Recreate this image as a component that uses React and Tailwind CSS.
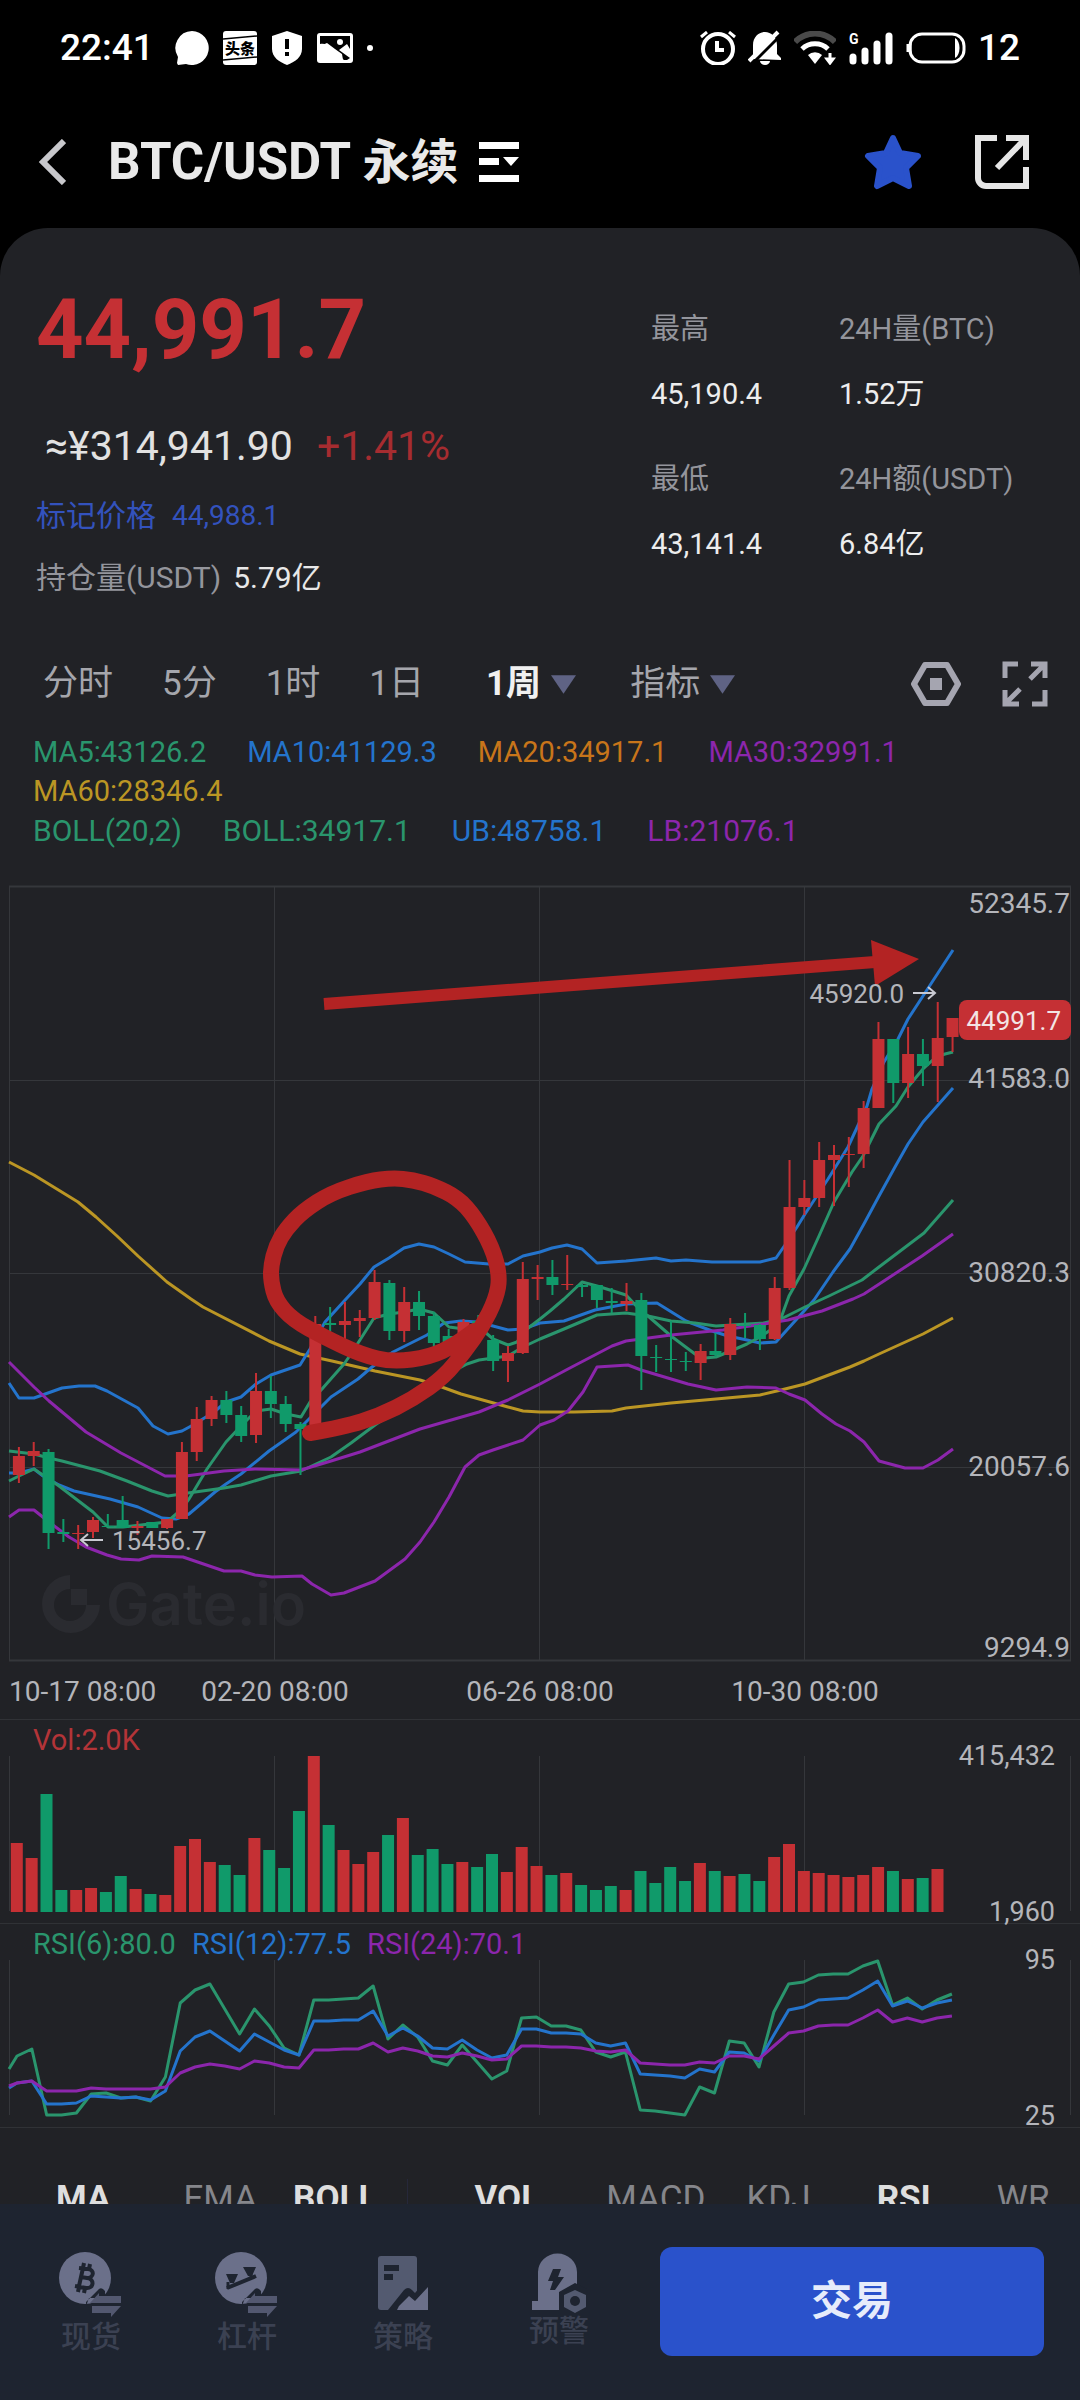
import { useState } from 'react';

const RED = '#c53034';
const GREEN = '#109a6a';
const LINE_GREEN = '#2a956d';
const LINE_BLUE = '#2474cc';
const LINE_PURPLE = '#8c26ac';
const LINE_YELLOW = '#bb9624';
const GRID = '#35373b';

// [up, high, body top, body bottom, low]
const candles = [
  [1, 568, 577, 596, 604], [1, 563, 572, 577, 587], [0, 570, 573, 654, 670], [0, 640, 653, 655, 663],
  [1, 646, 654, 655, 670], [1, 638, 641, 653, 659], [0, 635, 647, 648, 648], [0, 617, 641, 649, 649],
  [1, 642, 647, 649, 656], [0, 643, 643, 649, 649], [1, 640, 640, 649, 650], [1, 563, 573, 640, 640],
  [1, 528, 540, 573, 582], [1, 517, 521, 540, 547], [0, 512, 521, 536, 544], [0, 527, 536, 557, 563],
  [1, 494, 512, 556, 564], [0, 497, 512, 525, 539], [0, 517, 525, 545, 553], [0, 543, 545, 550, 596],
  [1, 437, 445, 549, 549], [0, 428, 444, 446, 453], [1, 423, 442, 446, 460], [1, 431, 439, 442, 458],
  [1, 391, 403, 439, 441], [0, 401, 404, 452, 461], [1, 408, 423, 452, 463], [0, 412, 423, 437, 451],
  [0, 433, 437, 464, 468], [0, 450, 457, 465, 467], [1, 440, 443, 463, 465], [0, 436, 442, 457, 460],
  [0, 456, 461, 482, 492], [1, 467, 474, 482, 503], [1, 383, 400, 474, 475], [1, 386, 398, 400, 421],
  [0, 381, 398, 406, 416], [1, 376, 405, 406, 411], [0, 405, 406, 408, 418], [0, 406, 406, 421, 429],
  [0, 409, 422, 424, 434], [1, 404, 422, 425, 432], [0, 414, 421, 477, 511], [0, 466, 478, 479, 493],
  [0, 442, 480, 481, 493], [0, 473, 482, 483, 492], [1, 465, 472, 484, 501], [0, 454, 472, 476, 478],
  [1, 439, 445, 476, 481], [0, 434, 446, 447, 459], [0, 445, 446, 460, 471], [1, 398, 409, 460, 461],
  [1, 281, 328, 409, 411], [1, 301, 319, 328, 336], [1, 263, 281, 319, 328], [1, 266, 276, 281, 327],
  [1, 258, 275, 276, 308], [1, 222, 229, 275, 289], [1, 143, 160, 229, 229], [0, 160, 160, 204, 224],
  [1, 148, 175, 204, 219], [0, 160, 175, 187, 207], [1, 123, 159, 187, 223], [1, 139, 139, 158, 173],
];

const overlays = [
  {
    color: LINE_YELLOW,
    points: '9,283 34,296 65,315 78,323 96,338 117,357 138,377 167,403 191,420 203,428 269,462 300,475 332,482 375,492 420,501 439,507 461,515 508,528 523,532 540,533 574,533 612,532 626,529 671,524 716,520 760,516 781,511 805,505 850,488 864,482 879,475 923,455 953,439',
  },
  {
    color: LINE_BLUE,
    points: '9,504 19,519 34,519 62,509 79,507 95,507 107,512 138,529 153,547 168,555 182,552 193,546 214,533 226,523 241,518 256,505 271,496 300,486 310,470 325,443 346,420 360,405 374,388 389,379 404,369 419,365 434,368 449,375 465,383 489,385 508,385 523,377 540,373 552,369 567,366 582,370 597,384 626,382 656,379 671,382 686,381 712,383 760,383 776,379 785,366 797,348 805,335 828,300 848,268 867,227 872,210 884,183 898,160 908,140 923,117 953,71',
  },
  {
    color: LINE_BLUE,
    points: '9,594 19,594 34,590 43,597 59,606 74,612 110,620 138,628 162,639 176,640 189,635 215,613 226,605 241,595 269,572 296,553 322,527 331,518 358,500 372,488 393,473 427,456 444,444 461,442 478,443 493,447 508,451 523,450 540,444 564,442 595,431 626,425 657,424 686,442 712,452 728,457 747,461 760,464 776,463 795,442 814,421 833,393 850,370 865,343 879,317 895,288 908,265 923,243 953,209',
  },
  {
    color: LINE_GREEN,
    points: '9,602 19,597 34,590 59,607 93,633 108,648 123,648 141,646 167,643 182,630 189,620 207,590 226,563 241,547 256,532 271,530 286,535 301,538 310,523 322,510 344,485 351,475 374,439 389,435 404,433 419,430 434,434 449,448 464,450 478,447 493,460 508,466 517,463 527,450 540,440 550,432 564,420 582,403 597,407 626,416 641,432 648,437 671,457 695,475 705,479 716,478 733,471 747,465 760,458 775,448 781,439 789,417 804,390 819,357 834,323 852,293 863,277 879,245 896,227 908,208 923,190 936,178 945,175 953,173',
  },
  {
    color: LINE_GREEN,
    points: '9,572 34,575 49,579 62,582 100,592 127,602 152,612 168,617 188,614 224,609 241,606 271,597 301,592 331,578 351,564 375,546 413,520 448,495 467,485 479,481 508,477 523,468 540,460 564,450 597,436 626,434 648,437 671,442 695,444 716,447 747,445 764,444 781,440 805,428 829,417 862,401 879,388 924,354 953,321',
  },
  {
    color: LINE_PURPLE,
    points: '9,483 34,508 49,522 86,553 121,574 165,597 186,597 224,592 255,590 301,591 331,582 360,573 420,550 479,533 508,521 540,505 568,490 612,467 626,462 671,456 723,451 764,445 788,441 822,432 853,420 864,415 922,377 953,355',
  },
  {
    color: LINE_PURPLE,
    points: '9,638 19,631 34,631 49,643 69,658 86,668 107,676 121,680 139,681 152,677 183,678 224,692 241,692 255,696 272,698 302,697 312,705 331,716 344,714 375,702 405,680 420,663 434,643 449,618 465,588 479,576 493,571 523,561 540,546 554,541 568,532 583,513 597,488 628,486 641,491 688,505 716,511 747,508 776,509 789,515 805,521 822,535 836,545 850,552 864,563 879,582 905,589 923,589 938,581 953,570',
  },
];

// negative = falling week
const volumes = [
  69, 54, -118, -22, 22, 24, -20, -36, 23, -18, 17, 66, 73, 50, -47, -37, 74, -62, -44, -101, 156, -87, 62, 48, 60,
  -77, 94, -57, -63, -48, 50, -45, -58, 40, 65, 46, -37, 39, -27, -22, -26, 22, -41, -29, -45, -31, 49, -41, 36, -38,
  -31, 55, 68, 41, 39, 37, 35, 37, 45, -41, 33, -34, 43,
];

const rsi = [
  {
    color: LINE_GREEN,
    start: 109,
    values: [
      96, 89, 155, 155, 153, 134, 133, 138, 137, 141, 117, 43, 30, 24, 49, 74, 49, 66, 88, 95, 40, 40, 39, 38, 26, 79,
      65, 77, 101, 105, 85, 102, 119, 111, 58, 57, 66, 66, 70, 92, 97, 92, 150, 151, 153, 155, 127, 133, 81, 83, 107,
      52, 24, 22, 15, 14, 14, 6, 1, 45, 38, 49, 40, 34,
    ],
  },
  {
    color: LINE_BLUE,
    start: 128,
    values: [
      123, 121, 144, 144, 143, 136, 137, 138, 137, 140, 131, 91, 77, 71, 81, 91, 74, 82, 90, 95, 61, 61, 60, 60, 51,
      76, 68, 76, 88, 89, 80, 90, 98, 95, 69, 69, 73, 73, 74, 83, 86, 83, 114, 115, 116, 118, 109, 112, 92, 93, 101,
      75, 50, 47, 40, 39, 38, 30, 21, 46, 41, 48, 43, 40,
    ],
  },
  {
    color: LINE_PURPLE,
    start: 126,
    values: [
      123, 121, 131, 131, 131, 128, 129, 129, 129, 129, 127, 113, 107, 104, 106, 109, 101, 103, 107, 108, 90, 90, 89,
      89, 83, 92, 88, 91, 96, 97, 93, 96, 100, 99, 86, 86, 87, 87, 88, 91, 92, 90, 103, 104, 105, 105, 102, 103, 96,
      96, 99, 86, 73, 71, 66, 65, 65, 58, 50, 62, 58, 62, 58, 56,
    ],
  },
];

const gridX = [10, 275, 540, 805, 1071];

// hand drawn loop, turned into a soft curve
const loop = [
  [310, 554], [344, 548], [379, 537], [413, 520], [444, 498], [465, 472], [482, 448], [496, 420], [500, 397],
  [492, 368], [475, 338], [458, 319], [434, 307], [413, 301], [393, 299], [368, 302], [331, 314], [303, 332],
  [286, 350], [276, 367], [271, 387], [271, 402], [276, 422], [293, 441], [324, 458], [362, 476], [393, 483],
  [430, 478], [455, 466], [474, 452],
];

function softPath(pts) {
  let d = `M${pts[0][0]} ${pts[0][1]}`;
  for (let i = 1; i < pts.length - 1; i++) {
    const mx = (pts[i][0] + pts[i + 1][0]) / 2;
    const my = (pts[i][1] + pts[i + 1][1]) / 2;
    d += `Q${pts[i][0]} ${pts[i][1]} ${mx} ${my}`;
  }
  const last = pts[pts.length - 1];
  return `${d}L${last[0]} ${last[1]}`;
}

function StatusBar() {
  return (
    <div className="flex h-24 items-center px-[60px] text-[37px] font-medium text-white">
      <span>22:41</span>
      <div className="ml-[21px] flex items-center gap-[14px]">
        <svg className="h-[34px] w-[34px]" viewBox="0 0 34 34" fill="#fff">
          <path d="M17 0a17 17 0 1 1-6 33L3 34l-1-2 1-6A17 17 0 0 1 17 0z" />
        </svg>
        <svg className="h-[34px] w-[34px]" viewBox="0 0 34 34">
          <rect width="34" height="34" rx="3" fill="#fff" />
          <path d="M0 8l34-3M0 29l34-3" stroke="#000" strokeWidth="1.5" />
          <text x="17" y="23" textAnchor="middle" fontSize="15" fontWeight="900" fill="#000">头条</text>
        </svg>
        <svg className="h-[34px] w-[32px]" viewBox="0 0 32 34">
          <path d="M16 0l15 5v13c0 8-7 13-15 16C8 31 1 26 1 18V5z" fill="#fff" />
          <path d="M14 8h4v10h-4zM14 21h4v4h-4z" fill="#000" />
        </svg>
        <svg className="h-[34px] w-[36px]" viewBox="0 0 36 34">
          <rect y="2" width="36" height="30" rx="3" fill="#fff" />
          <path d="M3 15l7-3 8 6 7 5 1 6h4l3-2V5H3z" fill="#000" />
          <path d="M3 13c8-2 12 6 24 16H3zM22 19l8-6 3 5v9z" fill="#fff" />
          <circle cx="23" cy="11" r="3" fill="#fff" />
        </svg>
        <span className="h-[6px] w-[6px] rounded-full bg-white" />
      </div>
      <div className="ml-auto flex items-center gap-3">
        <svg className="h-[34px] w-[36px]" viewBox="0 0 36 34" fill="none" stroke="#fff">
          <circle cx="18" cy="18" r="15" strokeWidth="4" />
          <path d="M17 10v9h7" strokeWidth="4" />
          <path d="M1 6l6-5M35 6l-6-5" strokeWidth="3" />
        </svg>
        <svg className="h-[36px] w-[34px]" viewBox="0 0 34 36">
          <path d="M5 29V15C5 7 11 2 17 2s12 5 12 13v9l4 4v2z" fill="#fff" />
          <path d="M12 31h10a5 4 0 0 1-10 0z" fill="#fff" />
          <path d="M5 33L34 4" stroke="#000" strokeWidth="3" />
          <path d="M1 31L30 2" stroke="#fff" strokeWidth="4" />
        </svg>
        <svg className="h-[34px] w-[42px]" viewBox="0 0 42 34" fill="none">
          <path d="M1 11a28 28 0 0 1 40 0" stroke="#4a4a4a" strokeWidth="6" />
          <path d="M8 18a19 19 0 0 1 26 0" stroke="#fff" strokeWidth="5" />
          <path d="M14 24a10 10 0 0 1 14 0l-7 9z" fill="#fff" />
          <path d="M36 22v6M33 28l3 4 3-4z" stroke="#fff" strokeWidth="3" fill="#fff" />
        </svg>
        <svg className="h-[34px] w-[46px] overflow-visible" viewBox="0 0 46 34">
          <text x="1" y="13" fontSize="14" fontWeight="700" fill="#fff">G</text>
          <path d="M5 26v4M17 20v10M29 13v17M41 5v25" stroke="#fff" strokeWidth="7" strokeLinecap="round" />
        </svg>
        <svg className="h-[32px] w-[60px]" viewBox="0 0 60 32" fill="none">
          <rect x="4" y="2" width="54" height="28" rx="12" stroke="#fff" strokeWidth="3" />
          <path d="M3 12v8" stroke="#fff" strokeWidth="5" />
          <path d="M49 6c6 3 6 17 0 20z" fill="#fff" />
        </svg>
        <span>12</span>
      </div>
    </div>
  );
}

function Header() {
  return (
    <header className="flex h-[132px] items-center pl-[38px] pr-[51px]">
      <button aria-label="返回">
        <svg className="h-[46px] w-[28px]" viewBox="0 0 28 46" fill="none" stroke="#c8c8cc" strokeWidth="6">
          <path d="M26 2L5 23l21 21" />
        </svg>
      </button>
      <button className="ml-[42px] flex items-center text-[51px] font-bold text-[#e9e9e9]">
        <h1>
          BTC/USDT <span className="text-[48px]">永续</span>
        </h1>
        <svg className="ml-5 h-[40px] w-[40px]" viewBox="0 0 40 40" fill="#fff">
          <path d="M0 0h40v7H0zM0 16h20v7H0zM0 33h40v7H0zM24 15h16l-8 9z" />
        </svg>
      </button>
      <button className="ml-auto" aria-label="收藏">
        <svg className="h-[56px] w-[58px]" viewBox="0 0 58 56" fill="#2a52cb" stroke="#2a52cb" strokeWidth="6" strokeLinejoin="round">
          <path d="M29 4l7 15 18 3-12 12 3 18-16-8-16 8 3-18L4 22l18-3z" />
        </svg>
      </button>
      <button className="ml-[53px]" aria-label="分享">
        <svg className="h-[54px] w-[54px]" viewBox="0 0 54 54" fill="none" stroke="#e6e6e6" strokeWidth="6">
          <path d="M22 3H3v40a8 8 0 0 0 8 8h40V32" />
          <path d="M31 3h20v22M51 3L22 33" />
        </svg>
      </button>
    </header>
  );
}

function Stat({ label, value }) {
  return (
    <div>
      <dt className="text-[#94959c]">{label}</dt>
      <dd className="mt-[25px] text-[#ededed]">{value}</dd>
    </div>
  );
}

function Summary() {
  return (
    <section className="flex justify-between pl-9 pr-[60px] pt-[54px]">
      <div>
        <div className="text-[83px] font-bold leading-[96px] text-[#c53034]">44,991.7</div>
        <div className="mt-10 flex gap-6 pl-[9px] text-[41px] leading-[56px] text-[#e2e2e2]">
          <span>≈¥314,941.90</span>
          <span className="text-[#a62c30]">+1.41%</span>
        </div>
        <div className="mt-[22px] flex gap-4 text-[28px] leading-10 text-[#3352bd]">
          <span className="text-[30px]">标记价格</span>
          <span>44,988.1</span>
        </div>
        <div className="mt-[22px] flex gap-3 text-[30px] leading-10 text-[#e8e8e8]">
          <span className="text-[#94959c]">持仓量(USDT)</span>
          <span>5.79亿</span>
        </div>
      </div>
      <dl className="grid grid-cols-[188px_181px] content-start gap-y-[45px] pt-[27px] text-[29px] leading-10">
        <Stat label="最高" value="45,190.4" />
        <Stat label="24H量(BTC)" value="1.52万" />
        <Stat label="最低" value="43,141.4" />
        <Stat label="24H额(USDT)" value="6.84亿" />
      </dl>
    </section>
  );
}

function Triangle() {
  return (
    <svg className="h-[19px] w-[25px]" viewBox="0 0 26 19" fill="#5f6384">
      <path d="M0 0h26L13 19z" />
    </svg>
  );
}

function Intervals() {
  const [active, setActive] = useState('1周');
  const tab = (name) => (active === name ? 'font-bold text-[#f0f0f0]' : 'text-[#a5a6ac]');

  return (
    <nav className="mt-14 flex h-[60px] items-center pl-[43px] pr-8 text-[35px]">
      <div className="flex items-center gap-[49px]">
        {['分时', '5分', '1时', '1日'].map((name) => (
          <button key={name} className={tab(name)} onClick={() => setActive(name)}>
            {name}
          </button>
        ))}
      </div>
      <button className={`ml-[62px] flex items-center gap-[10px] ${tab('1周')}`} onClick={() => setActive('1周')}>
        1周
        <Triangle />
      </button>
      <button className="ml-[54px] flex items-center gap-[10px] text-[#a5a6ac]">
        指标
        <Triangle />
      </button>
      <button className="ml-auto" aria-label="设置">
        <svg className="h-[44px] w-[50px]" viewBox="0 0 50 44">
          <path d="M14 3h22l11 19-11 19H14L3 22z" fill="none" stroke="#a5a5b0" strokeWidth="6" strokeLinejoin="round" />
          <rect x="19" y="16" width="12" height="12" fill="#a5a5b0" />
        </svg>
      </button>
      <button className="ml-[41px]" aria-label="全屏">
        <svg className="h-[46px] w-[46px]" viewBox="0 0 46 46" fill="none" stroke="#a5a5b0" strokeWidth="5">
          <path d="M3 17V3h13M29 3h14v14M43 3L28 18M43 29v14H30M17 43H3V29M3 43l15-15" />
        </svg>
      </button>
    </nav>
  );
}

function Legend() {
  return (
    <div className="pl-[33px] pt-[19px] text-[29px] leading-[39px]">
      <div className="flex flex-wrap gap-x-[41px]">
        <span className="text-[#2a956d]">MA5:43126.2</span>
        <span className="text-[#2474cc]">MA10:41129.3</span>
        <span className="text-[#c8751a]">MA20:34917.1</span>
        <span className="text-[#8c26ac]">MA30:32991.1</span>
      </div>
      <div className="text-[#bb9624]">MA60:28346.4</div>
      <div className="flex flex-wrap gap-x-[41px] text-[30px]">
        <span className="text-[#2a956d]">BOLL(20,2)</span>
        <span className="text-[#2a956d]">BOLL:34917.1</span>
        <span className="text-[#2474cc]">UB:48758.1</span>
        <span className="text-[#8c26ac]">LB:21076.1</span>
      </div>
    </div>
  );
}

function PriceChart() {
  return (
    <svg className="mt-[29px] block w-full" viewBox="0 0 1080 840">
      <g stroke={GRID}>
        {[7, 201, 394, 588, 781].map((y) => (
          <path key={y} d={`M9 ${y}.5H1071`} strokeWidth={y === 7 || y === 781 ? 2 : 1} />
        ))}
        {gridX.map((x) => (
          <path key={x} d={`M${x - 0.5} 7V782`} />
        ))}
      </g>

      <g fill="#2a2b30">
        <path d="M70 696a29 29 0 1 0 30 30H86a16 16 0 1 1-16-16z" />
        <rect x="71" y="710" width="16" height="16" />
        <text x="106" y="746" fontSize="58" fontWeight="600" fontFamily="Inter">Gate.io</text>
      </g>

      <g fill="none" strokeWidth="3" strokeLinejoin="round">
        {overlays.map((line, i) => (
          <polyline key={i} points={line.points} stroke={line.color} />
        ))}
      </g>

      {candles.map(([up, high, top, bottom, low], i) => {
        const x = 18.9 + i * 14.82;
        return (
          <g key={i} fill={up ? RED : GREEN}>
            <rect x={x - 1} y={high} width="2" height={low - high} />
            <rect x={x - 6} y={top} width="12" height={bottom - top} />
          </g>
        );
      })}

      <path d={softPath(loop)} fill="none" stroke="#b32323" strokeWidth="16" strokeLinecap="round" strokeLinejoin="round" />
      <path d="M324 125L875 83" stroke="#b32323" strokeWidth="12" />
      <path d="M871 61L919 80L875 107z" fill="#b32323" />

      <g fill="none" stroke="#c9cad2" strokeWidth="2">
        <path d="M103 661H81M88 655l-7 6 7 6" />
        <path d="M913 114h22M928 108l7 6-7 6" />
      </g>

      <g fill="#b4b5ba" fontSize="26">
        <text x="112" y="671">15456.7</text>
        <text x="904" y="124" textAnchor="end">45920.0</text>
      </g>

      <g fill="#b4b5ba" fontSize="28" textAnchor="end">
        <text x="1070" y="34">52345.7</text>
        <text x="1070" y="209">41583.0</text>
        <text x="1070" y="403">30820.3</text>
        <text x="1070" y="597">20057.6</text>
        <text x="1070" y="778">9294.9</text>
      </g>
      <rect x="959" y="121" width="112" height="40" rx="8" fill={RED} />
      <text x="1061" y="151" fontSize="26" textAnchor="end" fill="#f3e4e4">44991.7</text>

      <g fill="#b4b5ba" fontSize="28" textAnchor="middle">
        <text x="9" y="822" textAnchor="start">10-17 08:00</text>
        <text x="275" y="822">02-20 08:00</text>
        <text x="540" y="822">06-26 08:00</text>
        <text x="805" y="822">10-30 08:00</text>
      </g>
    </svg>
  );
}

function SubGrid() {
  return (
    <g stroke={GRID}>
      {gridX.map((x) => (
        <path key={x} d={`M${x - 0.5} 0V155`} />
      ))}
    </g>
  );
}

function VolumeChart() {
  return (
    <section className="border-t border-[#303236]">
      <div className="pl-[33px] pt-1 text-[29px] leading-8 text-[#b33438]">Vol:2.0K</div>
      <svg className="block w-full overflow-visible" viewBox="0 0 1080 167">
        <SubGrid />
        {volumes.map((v, i) => (
          <rect
            key={i}
            x={10.8 + i * 14.85}
            y={156 - Math.abs(v)}
            width="12"
            height={Math.abs(v)}
            fill={v > 0 ? RED : GREEN}
          />
        ))}
        <g fill="#b4b5ba" fontSize="27" textAnchor="end">
          <text x="1055" y="9">415,432</text>
          <text x="1055" y="165">1,960</text>
        </g>
      </svg>
    </section>
  );
}

function RsiChart() {
  return (
    <section className="border-y border-[#303236]">
      <div className="flex gap-4 pl-[33px] pt-1 text-[29px] leading-8">
        <span className="text-[#2a956d]">RSI(6):80.0</span>
        <span className="text-[#2474cc]">RSI(12):77.5</span>
        <span className="text-[#8c26ac]">RSI(24):70.1</span>
      </div>
      <svg className="block w-full overflow-visible" viewBox="0 0 1080 167">
        <SubGrid />
        {rsi.map(({ color, start, values }) => (
          <polyline
            key={color}
            points={`9,${start} ${values.map((v, i) => `${17 + i * 14.84},${v}`).join(' ')}`}
            fill="none"
            stroke={color}
            strokeWidth="3"
            strokeLinejoin="round"
          />
        ))}
        <g fill="#b4b5ba" fontSize="27" textAnchor="end">
          <text x="1055" y="9">95</text>
          <text x="1055" y="165">25</text>
        </g>
      </svg>
    </section>
  );
}

function IndicatorTabs() {
  const on = 'font-bold text-[#dedede]';
  const off = 'text-[#85868b]';
  return (
    <div className="flex h-[76px] overflow-hidden pl-14 pt-[51px] text-[35px] leading-10">
      <button className={on}>MA</button>
      <button className={`ml-[73px] ${off}`}>EMA</button>
      <button className={`ml-9 ${on}`}>BOLL</button>
      <span className="ml-[30px] h-7 w-px bg-[#26283a]" />
      <button className={`ml-[66px] ${on}`}>VOL</button>
      <button className={`ml-[66px] ${off}`}>MACD</button>
      <button className={`ml-[41px] ${off}`}>KDJ</button>
      <button className={`ml-[66px] ${on}`}>RSI</button>
      <button className={`ml-[66px] ${off}`}>WR</button>
    </div>
  );
}

function SwapArrows() {
  return (
    <>
      <path d="M27 54V50L40 37q3-2 6 2v7H30z" fill="#1e2430" />
      <path d="M31 51l9-10v3h22v7zM33 54h29L52 65v-4H33z" fill="#535870" />
    </>
  );
}

function BottomBar() {
  const item = 'mt-[5px] flex w-[156px] flex-col items-center text-[30px] font-medium leading-9 text-[#3b4152]';
  return (
    <footer className="flex grow items-start bg-[#1e2430] pl-[13px] pr-9 pt-[43px]">
      <button className={item}>
        <svg className="h-[67px] w-[64px]" viewBox="0 0 64 67">
          <circle cx="26" cy="26" r="26" fill="#6b708a" />
          <g fill="none" stroke="#1e2430" strokeWidth="4">
            <path d="M20 16l9 1c7 1 6 9-1 9l-6-1M28 26c8 1 7 11-1 10l-11-2M24 16l-4 18M25 11l-1 5M31 12l-1 5M20 35l-1 5M26 36l-1 5" />
          </g>
          <SwapArrows />
        </svg>
        现货
      </button>
      <button className={item}>
        <svg className="h-[67px] w-[64px]" viewBox="0 0 64 67">
          <circle cx="26" cy="26" r="26" fill="#6b708a" />
          <path d="M12 36l29-12" stroke="#1e2430" strokeWidth="4" />
          <path d="M11 22h12l-4 9h-4zM28 15h13l-4 9h-4z" fill="#1e2430" />
          <path d="M13 30v7M36 18v9" stroke="#1e2430" strokeWidth="3" />
          <SwapArrows />
        </svg>
        杠杆
      </button>
      <button className={item}>
        <svg className="h-[67px] w-[52px]" viewBox="0 0 52 67">
          <rect x="1" y="4" width="39" height="54" rx="3" fill="#535a70" />
          <path d="M7 13h15v6H7zM7 22h9v6H7z" fill="#1e2430" />
          <path d="M11 58l16-20q4-4 8 0l3 3 6-7v24z" fill="#1e2430" />
          <path d="M20 58l2-4 10-10 6 5 13-14v23z" fill="#6b708a" />
        </svg>
        策略
      </button>
      <button className={item}>
        <svg className="h-[61px] w-[56px]" viewBox="0 0 56 61">
          <path d="M1 58v-9h6V20a19 18 0 0 1 39 0v38z" fill="#6b708a" />
          <path d="M22 17h8l-3 8h6l-9 13h-5l3-9h-5z" fill="#1e2430" />
          <path d="M28 61V40l16-9 12 6v24z" fill="#1e2430" />
          <path d="M44 38l11 5v12l-11 6-11-6V43z" fill="#535a70" />
          <circle cx="44" cy="49" r="5" fill="#1e2430" />
        </svg>
        预警
      </button>
      <button className="ml-[23px] h-[109px] flex-1 rounded-xl bg-[#2a52cb] text-[41px] font-bold text-[#e6ecfb]">
        交易
      </button>
    </footer>
  );
}

export default function App() {
  return (
    <div className="flex min-h-screen flex-col bg-black font-['Roboto','Noto_Sans_CJK_SC',sans-serif]">
      <StatusBar />
      <Header />
      <main className="rounded-t-[48px] bg-[#212226]">
        <Summary />
        <Intervals />
        <Legend />
        <PriceChart />
        <VolumeChart />
        <RsiChart />
        <IndicatorTabs />
      </main>
      <BottomBar />
    </div>
  );
}
